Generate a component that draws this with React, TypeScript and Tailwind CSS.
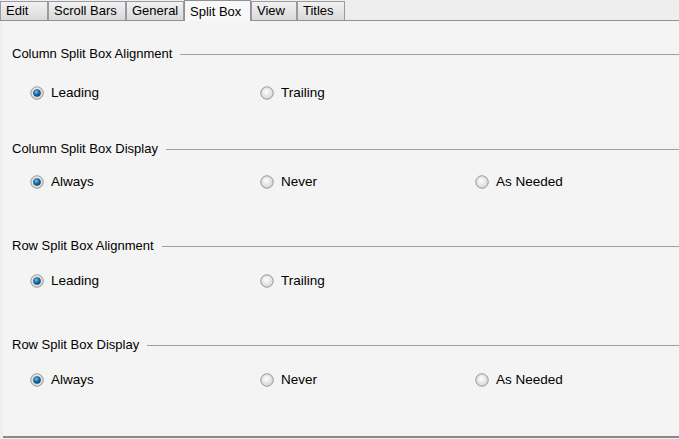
import { useState } from "react";

const tabs = ["Edit", "Scroll Bars", "General", "Split Box", "View", "Titles"];
const tabWidths = ["w-[48px]", "w-[78px]", "w-[58px]", "w-[67px]", "w-[46px]", "w-[48px]"];

function Radio({ checked }: { checked: boolean }) {
	return (
		<svg width="14" height="14" viewBox="0 0 14 14" className="shrink-0">
			<defs>
				<radialGradient id="off" cx="45%" cy="40%" r="60%">
					<stop offset="0%" stopColor="#ffffff" />
					<stop offset="100%" stopColor="#d4d4d4" />
				</radialGradient>
				<radialGradient id="dot" cx="40%" cy="35%" r="65%">
					<stop offset="0%" stopColor="#7fd0f5" />
					<stop offset="45%" stopColor="#1b7fc0" />
					<stop offset="100%" stopColor="#0b3f6e" />
				</radialGradient>
			</defs>
			<circle cx="7" cy="7" r="6.2" fill="url(#off)" stroke="#8f8f8f" strokeWidth="1" />
			<circle cx="7" cy="7" r="5" fill="none" stroke="#e0e0e0" strokeWidth="0.8" />
			{checked && <circle cx="7" cy="7" r="3.6" fill="url(#dot)" stroke="#2a4f6e" strokeWidth="0.6" />}
		</svg>
	);
}

function Title({ text, className }: { text: string; className: string }) {
	return (
		<div className={`flex items-center h-4 ${className}`}>
			<span className="pl-[9px] pr-2 whitespace-nowrap">{text}</span>
			<div className="flex-1 h-px bg-[#a0a0a0]" />
		</div>
	);
}

function Row({ items, selected, className }: { items: string[]; selected: number; className: string }) {
	const cols = ["w-[230px]", "w-[215px]", "w-[150px]"];
	return (
		<div className={`flex h-4 pl-[27px] text-[13.5px] ${className}`}>
			{items.map((it, i) => (
				<div key={it} className={`flex items-center gap-[7px] ${cols[i]}`}>
					<Radio checked={i === selected} />
					<span>{it}</span>
				</div>
			))}
		</div>
	);
}

export default function App() {
	const [active] = useState(3);

	return (
		<div className="w-[679px] h-[439px] bg-[#eeeeee] text-[13px] text-black overflow-hidden" style={{ fontFamily: '"Liberation Sans", Arial, sans-serif' }}>
			{/* Tabs */}
			<div className="flex h-[21px] items-end border-b border-[#8e8f98]">
				{tabs.map((t, i) =>
					i === active ? (
						<div key={t} className={`${tabWidths[i]} h-[21px] -mb-px bg-[#f8f8f8] border border-b-0 border-[#8e8f98] flex items-start pt-[1px] pl-[5px]`}>
							{t}
						</div>
					) : (
						<div key={t} className={`${tabWidths[i]} h-[19px] bg-gradient-to-b from-[#f2f2f2] to-[#d9d9d9] border border-b-0 border-[#9a9aa0] flex items-center pl-[5px]`}>
							{t}
						</div>
					)
				)}
			</div>

			{/* Panel */}
			<div className="ml-[3px] h-[417px] bg-[#f4f4f4] border-b-2 border-[#8a8a8a] flex flex-col">
				<Title text="Column Split Box Alignment" className="mt-[25px]" />
				<Row items={["Leading", "Trailing"]} selected={0} className="mt-[23px]" />
				<Title text="Column Split Box Display" className="mt-[40px]" />
				<Row items={["Always", "Never", "As Needed"]} selected={0} className="mt-[17px]" />
				<Title text="Row Split Box Alignment" className="mt-[48px]" />
				<Row items={["Leading", "Trailing"]} selected={0} className="mt-[19px]" />
				<Title text="Row Split Box Display" className="mt-[48px]" />
				<Row items={["Always", "Never", "As Needed"]} selected={0} className="mt-[19px]" />
			</div>
		</div>
	);
}
